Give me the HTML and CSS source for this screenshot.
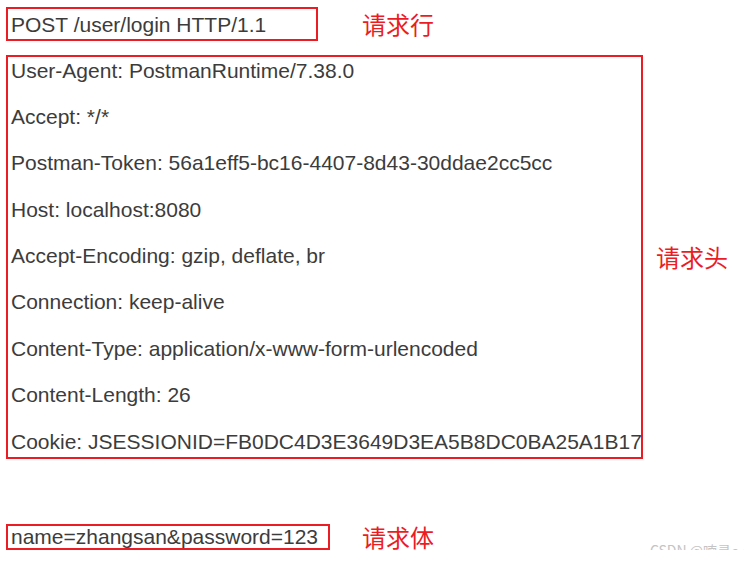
FILE: index.html
```html
<!DOCTYPE html>
<html>
<head>
<meta charset="utf-8">
<meta name="viewport" content="width=device-width, initial-scale=1">
<link rel="stylesheet" href="styles.css">
</head>
<body>

<div class="request">
  <div class="row row-line">
    <div class="box box-line">POST /user/login HTTP/1.1</div>
    <span class="tag">请求行</span>
  </div>

  <div class="row row-head">
    <div class="box box-head">
      <div class="header">User-Agent: PostmanRuntime/7.38.0</div>
      <div class="header">Accept: */*</div>
      <div class="header">Postman-Token: 56a1eff5-bc16-4407-8d43-30ddae2cc5cc</div>
      <div class="header">Host: localhost:8080</div>
      <div class="header">Accept-Encoding: gzip, deflate, br</div>
      <div class="header">Connection: keep-alive</div>
      <div class="header">Content-Type: application/x-www-form-urlencoded</div>
      <div class="header">Content-Length: 26</div>
      <div class="header">Cookie: JSESSIONID=FB0DC4D3E3649D3EA5B8DC0BA25A1B17</div>
    </div>
    <span class="tag">请求头</span>
  </div>

  <div class="row row-body">
    <div class="box box-body">name=zhangsan&amp;password=123</div>
    <span class="tag">请求体</span>
    <span class="mark">CSDN @喃寻～</span>
  </div>
</div>

</body>
</html>
```

FILE: styles.css
```css
* {
  box-sizing: border-box;
}

body {
  margin: 0;
  background-color: #fff;
  font-family: "Liberation Sans", Arial, sans-serif;
}

.request {
  padding: 7px 5px 0 6px;
}

.row {
  display: flex;
  align-items: center;
}

.box {
  border: 2px solid #ec1c24;
  color: #3c3c3c;
  font-size: 21px;
  line-height: 23px;
  white-space: nowrap;
}

.tag {
  color: #ec1c24;
  font-family: "Noto Sans CJK SC", sans-serif;
  font-size: 24px;
  line-height: 1;
}

/* 请求行 */
.row-line {
  margin-bottom: 14px;
}

.box-line {
  width: 312px;
  padding: 4px 2px 3px 3px;
}

.row-line .tag {
  margin-left: 44px;
}

/* 请求头 */
.row-head {
  margin-bottom: 65px;
}

.box-head {
  width: 637px;
  padding: 1.5px 2px 4px 3px;
  display: flex;
  flex-direction: column;
  gap: 23.4px;
}

.row-head .tag {
  margin-left: 13px;
}

/* 请求体 */
.box-body {
  width: 324px;
  padding: 0 2px 0 3px;
  line-height: 22px;
}

.row-body .tag {
  margin-left: 32px;
}

.mark {
  margin-left: auto;
  align-self: flex-end;
  margin-bottom: -7px;
  color: #c4c4c4;
  font-family: "Noto Sans CJK SC", sans-serif;
  font-size: 14px;
  line-height: 14px;
  white-space: nowrap;
}
```
